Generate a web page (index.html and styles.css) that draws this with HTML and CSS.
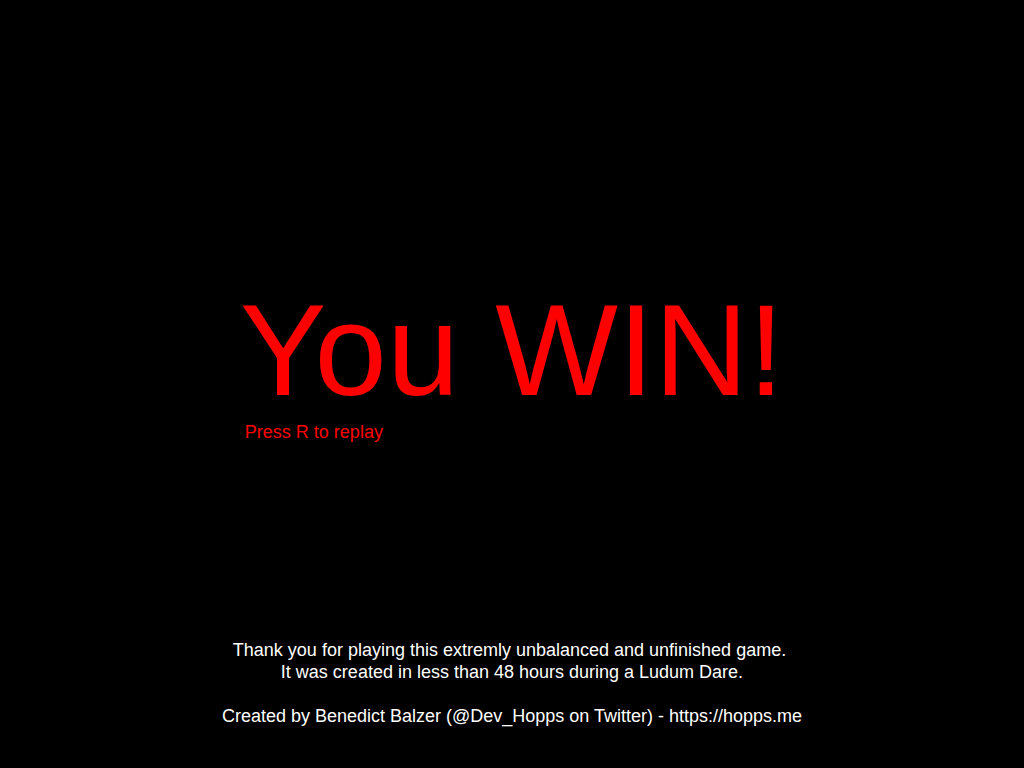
FILE: index.html
```html
<!DOCTYPE html>
<html lang="en">
<head>
<meta charset="utf-8">
<title>You WIN!</title>
<link rel="stylesheet" href="styles.css">
</head>
<body>
<main class="screen">
  <section class="result">
    <div class="result-inner">
      <h1 class="title">You WIN!</h1>
      <p class="hint">Press R to replay</p>
    </div>
  </section>
  <footer class="credits">
    <p class="lead">Thank you for playing this extremly unbalanced and unfinished game.</p>
    <p>It was created in less than 48 hours during a Ludum Dare.</p>
    <p class="blank">&nbsp;</p>
    <p>Created by Benedict Balzer (@Dev_Hopps on Twitter) - https://hopps.me</p>
  </footer>
</main>
</body>
</html>
```

FILE: styles.css
```css
html, body {
  margin: 0;
  padding: 0;
  background: #000;
}
.screen {
  width: 1024px;
  height: 768px;
  display: flex;
  flex-direction: column;
  font-family: "Liberation Sans", Arial, sans-serif;
  background: #000;
}
.result {
  display: flex;
  justify-content: center;
  padding-top: 285px;
}
.result-inner {
  display: flex;
  flex-direction: column;
  align-items: flex-start;
}
.title {
  margin: 0;
  font-size: 130px;
  font-weight: normal;
  line-height: 1;
  color: #ff0000;
}
.hint {
  margin: 8px 0 0 5px;
  font-size: 18px;
  line-height: 1;
  color: #ff0000;
}
.credits {
  margin-top: auto;
  padding-bottom: 41px;
  color: #fff;
  font-size: 18px;
  line-height: 22px;
  text-align: center;
}
.credits p {
  margin: 0;
}
.credits .lead {
  padding-right: 5px;
}
```
